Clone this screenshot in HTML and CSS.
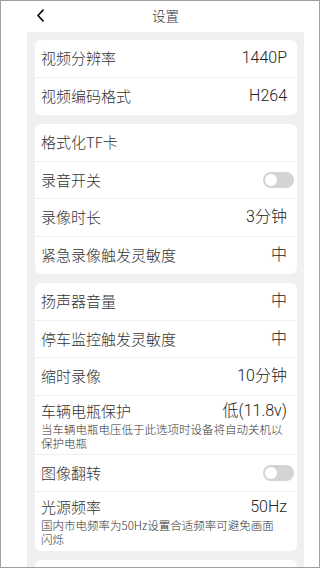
FILE: index.html
```html
<!DOCTYPE html>
<html lang="zh">
<head>
<meta charset="utf-8">
<title>设置</title>
<link rel="stylesheet" href="styles.css">
</head>
<body>
<div class="frame">
  <div class="screen">
    <header class="topbar">
      <span class="back">
        <svg width="9" height="13" viewBox="0 0 9 13"><path d="M7 1.2L2 6.5L7 11.8" fill="none" stroke="#111" stroke-width="1.8" stroke-linecap="round" stroke-linejoin="round"/></svg>
      </span>
      <span class="title">设置</span>
      <span></span>
    </header>
    <main class="panel">
      <section class="card">
        <div class="row"><span class="label">视频分辨率</span><span class="value">1440P</span></div>
        <div class="row"><span class="label">视频编码格式</span><span class="value">H264</span></div>
      </section>
      <section class="card">
        <div class="row"><span class="label">格式化TF卡</span></div>
        <div class="row"><span class="label">录音开关</span><span class="toggle"><span class="knob"></span></span></div>
        <div class="row"><span class="label">录像时长</span><span class="value">3分钟</span></div>
        <div class="row"><span class="label">紧急录像触发灵敏度</span><span class="value">中</span></div>
      </section>
      <section class="card">
        <div class="row"><span class="label">扬声器音量</span><span class="value">中</span></div>
        <div class="row"><span class="label">停车监控触发灵敏度</span><span class="value">中</span></div>
        <div class="row"><span class="label">缩时录像</span><span class="value">10分钟</span></div>
        <div class="row tall">
          <div class="line"><span class="label">车辆电瓶保护</span><span class="value">低(11.8v)</span></div>
          <p class="desc">当车辆电瓶电压低于此选项时设备将自动关机以保护电瓶</p>
        </div>
        <div class="row"><span class="label">图像翻转</span><span class="toggle"><span class="knob"></span></span></div>
        <div class="row tall">
          <div class="line"><span class="label">光源频率</span><span class="value">50Hz</span></div>
          <p class="desc">国内市电频率为50Hz设置合适频率可避免画面闪烁</p>
        </div>
      </section>
      <section class="card">
        <div class="row"><span class="label">&nbsp;</span></div>
      </section>
    </main>
  </div>
</div>
</body>
</html>
```
FILE: styles.css
```css
* { box-sizing: border-box; }
html, body { margin: 0; padding: 0; background: #fff; }
body {
  font-family: "Liberation Sans", "Noto Sans CJK SC", sans-serif;
  color: #333;
}
.frame {
  width: 320px;
  height: 568px;
  border: 1px solid #a0a0a0;
  overflow: hidden;
  padding-left: 26px;
  background: #fff;
}
.screen {
  width: 277px;
  height: 100%;
  display: flex;
  flex-direction: column;
}
.topbar {
  height: 31px;
  flex: none;
  display: grid;
  grid-template-columns: 1fr auto 1fr;
  align-items: center;
  background: #fff;
  padding-bottom: 3px;
}
.back {
  padding-left: 9px;
  display: flex;
  align-items: center;
  height: 13px;
}
.back svg { display: block; }
.title {
  font-family: "Noto Sans CJK SC", sans-serif;
  font-size: 13.5px;
  line-height: 16px;
  font-weight: 300;
  color: #333;
}
.panel {
  flex: 1;
  background: #f0f0f2;
  padding: 8px 7px 0 8px;
  display: flex;
  flex-direction: column;
  gap: 9px;
}
.card {
  background: #fff;
  border-radius: 6px;
  overflow: hidden;
  flex: none;
}
.row {
  height: 37.5px;
  padding: 0 10px 0 6px;
  display: flex;
  align-items: center;
  justify-content: space-between;
  border-bottom: 1px solid #f0f0f0;
}
.row:last-child { border-bottom: none; }
.label {
  font-family: "Noto Sans CJK SC", sans-serif;
  font-size: 15px;
  line-height: 18px;
  font-weight: 300;
  color: #333;
  white-space: nowrap;
}
.value {
  font-family: Roboto, "Noto Sans CJK SC", sans-serif;
  font-size: 16px;
  line-height: 18px;
  font-weight: 300;
  color: #222;
  white-space: nowrap;
}
.row.tall {
  display: block;
  height: 59px;
  padding-top: 6px;
}
.line {
  display: flex;
  justify-content: space-between;
  align-items: center;
}
.desc {
  margin: 2px 0 0;
  font-family: "Noto Sans CJK SC", sans-serif;
  font-size: 11.5px;
  line-height: 14px;
  font-weight: 300;
  color: #333;
  padding-right: 4px;
}
.toggle {
  width: 31px;
  height: 16px;
  border-radius: 8px;
  background: #d4d4d6;
  display: flex;
  align-items: center;
  padding-left: 2px;
  margin-right: -7px;
}
.knob {
  width: 12px;
  height: 12px;
  border-radius: 50%;
  background: #fff;
}
```
